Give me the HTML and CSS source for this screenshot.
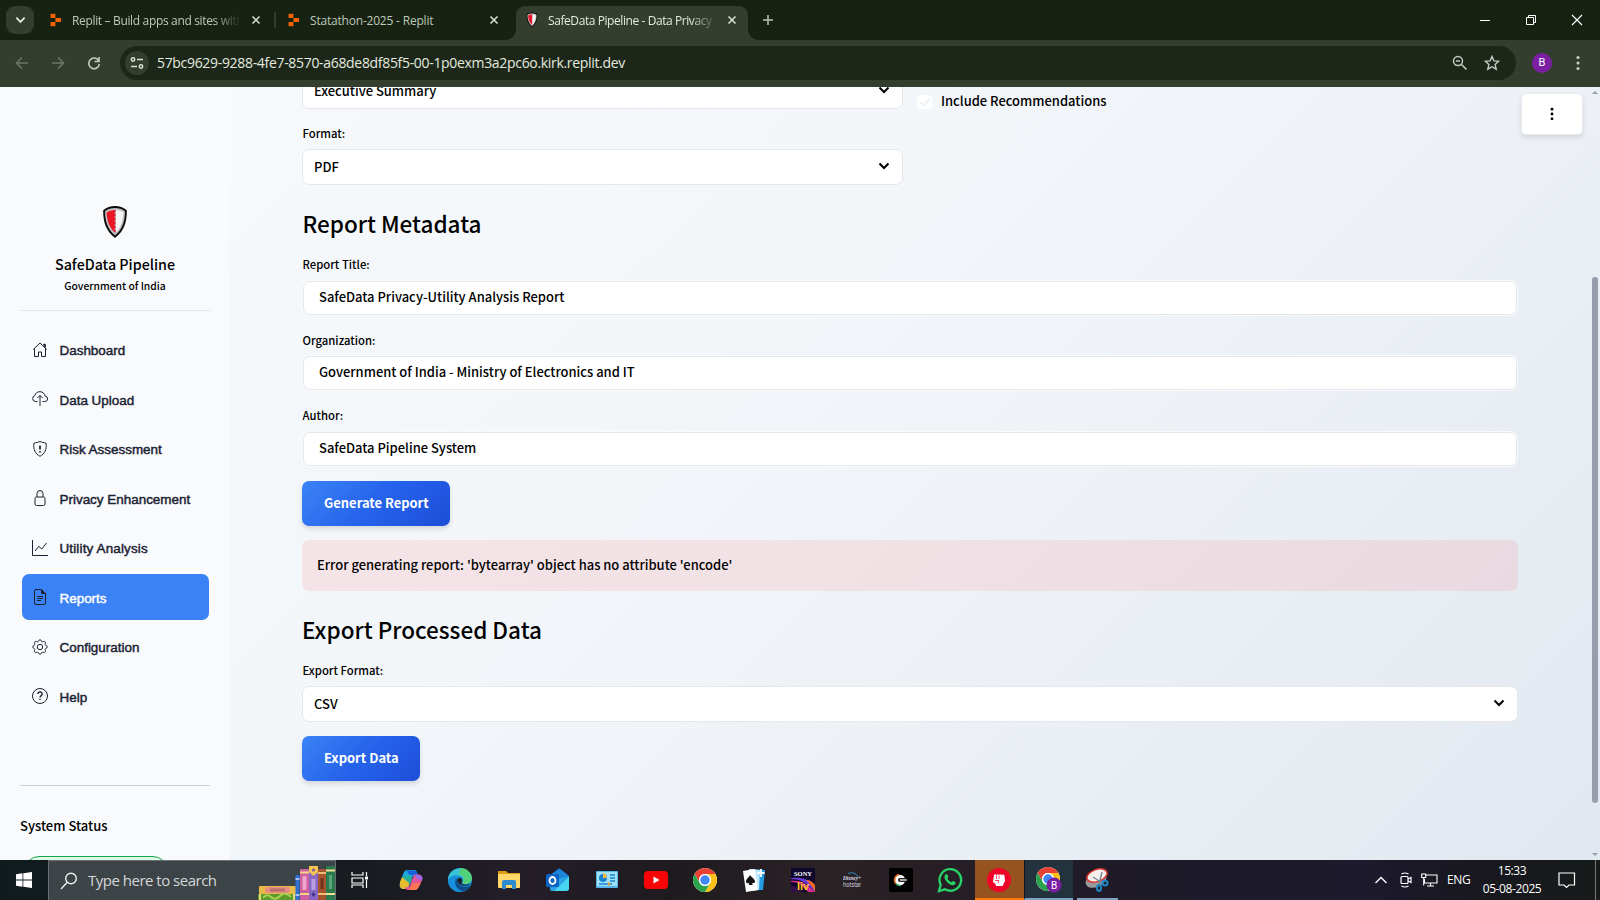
FILE: index.html
```html
<!DOCTYPE html>
<html lang="en">
<head>
<meta charset="utf-8">
<title>SafeData Pipeline - Data Privacy</title>
<link rel="stylesheet" href="styles.css">
</head>
<body>
<svg class="defs" width="0" height="0">
  <defs>
    <symbol id="replit" viewBox="0 0 12 14"><path fill="#f26207" d="M1.2.8h4.2v4.1H1.2A.7.7 0 0 1 .5 4.200V1.500a.7.7 0 0 1 .7-.7zM5.400 4.900h5a.7.7 0 0 1 .7.7v2.800a.7.7 0 0 1-.7.7h-5zM1.200 9.100h4.200v4.100H1.200a.7.7 0 0 1-.7-.7V9.800a.7.7 0 0 1 .7-.7z"/></symbol>
    <symbol id="shield" viewBox="0 0 26 34"><path d="M13 1C9 1 4 2.500 1.200 5.200 1 17 4 26 13 33c9-7 12-16 11.800-27.800C22 2.500 17 1 13 1z" fill="#0a0a0a"/><path d="M13 3c-3.500 0-7.500 1-10 3.200C3 16.500 6 24.500 13 30.500c7-6 10-14 10-24.300C20.500 4 16.500 3 13 3z" fill="#bdbdbd"/><path d="M14 5c3 .2 5.500 1 7.500 2.500C21 16 18.500 23 14 27.500z" fill="#f4f4f4"/><path d="M13.500 5C10 5 7 6 4.600 7.500 5 16 7.500 23 13.500 28v-3l-1.500-1 1.500-1v-2l-1.500-1 1.500-1v-2l-1.500-1 1.500-1v-2l-1.500-1 1.500-1V9l-1.500-1 1.500-1z" fill="#ec1528"/></symbol>
    <symbol id="x" viewBox="0 0 10 10"><path d="M1.500 1.500l7 7M8.500 1.500l-7 7" stroke="currentColor" stroke-width="1.500"/></symbol>
    <symbol id="chev" viewBox="0 0 12 8"><path d="M1.500 1.500L6 6l4.500-4.500" fill="none" stroke="currentColor" stroke-width="2"/></symbol>
    <symbol id="dots" viewBox="0 0 4 16"><g fill="currentColor"><circle cx="2" cy="2.500" r="1.600"/><circle cx="2" cy="8" r="1.600"/><circle cx="2" cy="13.500" r="1.600"/></g></symbol>
    <symbol id="chrome" viewBox="0 0 24 24"><circle cx="12" cy="12" r="12" fill="#fff"/><path d="M1.610 6A12 12 0 0 1 22.390 6H12a6 6 0 0 0-5.200 9z" fill="#e94235"/><path d="M22.390 6A12 12 0 0 1 12 24l5.200-9A6 6 0 0 0 12 6z" fill="#fbc116"/><path d="M1.610 6A12 12 0 0 0 12 24l5.200-9a6 6 0 0 1-10.400 0z" fill="#2ba24c"/><circle cx="12" cy="12" r="6" fill="#fff"/><circle cx="12" cy="12" r="4.700" fill="#4285f4"/></symbol>
  </defs>
</svg>

<header class="browser">
  <div class="tabs">
    <div class="tab-search"><svg width="11" height="8"><use href="#chev"/></svg></div>
    <div class="tab tab-a"><svg width="12" height="14"><use href="#replit"/></svg><span class="tab-text fade t1">Replit – Build apps and sites with</span><svg class="close" width="10" height="10"><use href="#x"/></svg></div>
    <i class="tab-sep"></i>
    <div class="tab tab-b"><svg width="12" height="14"><use href="#replit"/></svg><span class="tab-text t2">Statathon-2025 - Replit</span><svg class="close" width="10" height="10"><use href="#x"/></svg></div>
    <div class="tab tab-active"><svg width="12" height="16"><use href="#shield"/></svg><span class="tab-text fade t3">SafeData Pipeline - Data Privacy</span><svg class="close" width="10" height="10"><use href="#x"/></svg></div>
    <svg class="plus" width="12" height="12"><path d="M6 1v10M1 6h10" stroke="#b9c6b3" stroke-width="1.500"/></svg>
    <div class="win">
      <svg width="46" height="20"><path d="M18 10.500h10" stroke="#fff"/></svg>
      <svg width="46" height="20"><path d="M18.500 7.500h7v7h-7zM20.500 7.500v-2h7v7h-2" fill="none" stroke="#fff"/></svg>
      <svg width="46" height="20"><path d="M18 5l10 10M28 5L18 15" stroke="#fff" stroke-width="1.200"/></svg>
    </div>
  </div>
  <div class="toolbar">
    <svg class="nav" width="36" height="20" fill="none" stroke="#6c7768" stroke-width="1.500"><path d="M28 10H17M22 4.500L16.500 10l5.500 5.500"/></svg>
    <svg class="nav" width="36" height="20" fill="none" stroke="#6c7768" stroke-width="1.500"><path d="M16 10h11M22 4.500l5.500 5.500-5.500 5.500"/></svg>
    <svg class="nav" width="36" height="20" fill="none" stroke="#c2cfbb" stroke-width="1.600"><path d="M26.500 7.500A5.300 5.300 0 1 0 27.300 11M27 4v4.500h-4.500"/></svg>
    <div class="url">
      <span class="site"><svg width="14" height="14" fill="none" stroke="#d5e0cf" stroke-width="1.500"><circle cx="3" cy="3.500" r="1.700"/><path d="M7 3.500h6M1 10.500h6"/><circle cx="11" cy="10.500" r="1.700"/></svg></span>
      <span class="url-text">57bc9629-9288-4fe7-8570-a68de8df85f5-00-1p0exm3a2pc6o.kirk.replit.dev</span>
      <svg class="zoom" width="16" height="16" fill="none" stroke="#c2c9be" stroke-width="1.500"><circle cx="6" cy="6" r="4.500"/><path d="M9.500 9.500l5 5M4 6h4"/></svg>
      <svg class="star" width="16" height="16" viewBox="0 0 16 16"><path d="M8 1.500l1.900 4.400 4.800.4-3.600 3.200 1.100 4.700L8 11.700l-4.200 2.500 1.100-4.700L1.300 6.300l4.800-.4z" fill="none" stroke="#c2c9be" stroke-width="1.400"/></svg>
    </div>
    <span class="avatar">B</span>
    <svg class="kebab" width="4" height="16"><use href="#dots"/></svg>
  </div>
</header>

<div class="app">
  <aside class="side">
    <svg class="logo" width="26" height="34"><use href="#shield"/></svg>
    <div class="brand"><span>SafeData Pipeline</span></div>
    <div class="sub"><span>Government of India</span></div>
    <hr class="line1">
    <nav class="menu">
      <a><svg viewBox="0 0 16 16"><path d="M1.300 7.500L8 1l6.700 6.500M2.500 6.500v8h4v-4.500h3v4.500h4v-8"/><path d="M11.500 2.300h1.800v3.200z" fill="currentColor"/></svg><span>Dashboard</span></a>
      <a><svg viewBox="0 0 16 16"><path d="M5.500 10.500h-2a3 3 0 0 1-.6-5.900A5.200 5.200 0 0 1 8 .7c2.700 0 4.900 2 5.100 4.400a2.700 2.700 0 0 1-.4 5.400h-2.200M8 15V4.500M5.500 7L8 4.500 10.500 7"/></svg><span>Data Upload</span></a>
      <a><svg viewBox="0 0 16 16"><path d="M8 .6C6.500 1 4 1.800 1.900 2.200 1 8.500 3.500 13 8 15.300c4.500-2.300 7-6.800 6.100-13.100C12 1.800 9.500 1 8 .6z"/><path d="M8 4.500v4M8 10v1.500" stroke-width="1.700"/></svg><span>Risk Assessment</span></a>
      <a><svg viewBox="0 0 16 16"><path d="M5 7V3.500a3 3 0 0 1 6 0V7M4.500 7h7a1.500 1.500 0 0 1 1.500 1.500V14a1.500 1.500 0 0 1-1.500 1.500h-7A1.500 1.500 0 0 1 3 14V8.500A1.500 1.500 0 0 1 4.500 7z"/></svg><span>Privacy Enhancement</span></a>
      <a><svg viewBox="0 0 16 16"><path d="M.5 0v15.500H16M3 11l3.800-4.700 3 2.700L14.500 3"/></svg><span class="wide">Utility Analysis</span></a>
      <a class="on"><svg viewBox="0 0 16 16"><path d="M9.500.5H4A1.500 1.500 0 0 0 2.500 2v12A1.500 1.500 0 0 0 4 15.500h8a1.500 1.500 0 0 0 1.500-1.500V4.500zM5 7.500h6M5 9.500h6M5 11.500h4"/><path d="M9.500.5v4h4z" fill="currentColor"/></svg><span>Reports</span></a>
      <a><svg viewBox="0 0 16 16"><circle cx="8" cy="8" r="2.700"/><path d="M6.700 1.800c.4-1.500 2.200-1.500 2.600 0 .2 1 1.200 1.300 2 .8 1.400-.7 2.700.6 2 1.900-.5.900-.1 1.900.9 2.200 1.500.4 1.500 2.200 0 2.600-1 .3-1.400 1.300-.9 2.200.7 1.300-.6 2.600-2 1.900-.8-.5-1.800-.1-2 .8-.4 1.500-2.200 1.500-2.600 0-.3-.9-1.300-1.300-2.200-.8-1.300.7-2.600-.6-1.900-1.900.5-.9.1-1.900-.8-2.200-1.500-.4-1.500-2.200 0-2.600.9-.3 1.300-1.300.8-2.200-.7-1.300.6-2.600 1.900-1.900.9.500 1.900.1 2.200-.8z"/></svg><span>Configuration</span></a>
      <a><svg viewBox="0 0 16 16"><circle cx="8" cy="8" r="7.500"/><path d="M5.800 6c0-2.800 4.500-2.600 4.400 0C10.200 7.500 8 7.800 8 9.500M8 10.700v1.400" stroke-width="1.400"/></svg><span>Help</span></a>
    </nav>
    <hr class="line2">
    <div class="status">System Status</div>
    <div class="pill"></div>
  </aside>

  <main class="main">
    <div class="top">
      <div class="half">
        <div class="select cut"><span class="w1">Executive Summary</span><svg width="12" height="8"><use href="#chev"/></svg></div>
        <div class="label fmt">Format:</div>
        <div class="select"><span>PDF</span><svg width="12" height="8"><use href="#chev"/></svg></div>
      </div>
      <div class="check"><i><svg width="15" height="14"><path d="M3 7l3.500 3.500L12.500 4" fill="none" stroke="#eef1f5" stroke-width="2"/></svg></i><span class="w2">Include Recommendations</span></div>
    </div>
    <h2 class="h-meta">Report Metadata</h2>
    <div class="label l1">Report Title:</div>
    <div class="input">SafeData Privacy-Utility Analysis Report</div>
    <div class="label l2">Organization:</div>
    <div class="input">Government of India - Ministry of Electronics and IT</div>
    <div class="label l2 l-author">Author:</div>
    <div class="input">SafeData Pipeline System</div>
    <div class="btn gen">Generate Report</div>
    <div class="alert">Error generating report: 'bytearray' object has no attribute 'encode'</div>
    <h2 class="h-exp">Export Processed Data</h2>
    <div class="label l3">Export Format:</div>
    <div class="select"><span>CSV</span><svg width="12" height="8"><use href="#chev"/></svg></div>
    <div class="btn exp">Export Data</div>
  </main>
  <div class="more"><svg width="4" height="14"><use href="#dots"/></svg></div>
  <div class="scroll"><i class="up"></i><i class="thumb"></i><i class="down"></i></div>
</div>

<footer class="taskbar">
  <div class="start"><svg width="16" height="16" fill="#fff"><path d="M0 2.200l6.500-.9v6.300H0zM7.300 1.200L16 0v7.600H7.300zM0 8.400h6.500v6.300L0 13.800zM7.300 8.400H16V16l-8.700-1.200z"/></svg></div>
  <div class="search">
    <svg class="mag" width="18" height="18" fill="none" stroke="#eee" stroke-width="1.400"><circle cx="11" cy="6.500" r="5.300"/><path d="M7 10.500L1 17"/></svg>
    <span>Type here to search</span>
    <svg class="books" width="77" height="34" viewBox="0 0 77 34">
      <rect x="1" y="20" width="37" height="8" rx="1" fill="#e9b949"/><rect x="7" y="21" width="25" height="6" rx="3" fill="#e98a83"/><rect x="12" y="22.500" width="15" height="3" fill="#b9706d"/>
      <rect x="0" y="28" width="38" height="6" fill="#5c9a2a"/><path d="M5 32q4-5 8-1t9-1 11 1" stroke="#a8d050" stroke-width="2" fill="none"/><path d="M2 28v6M36 28v6" stroke="#e8d97a" stroke-width="2"/>
      <rect x="37.500" y="9" width="4" height="25" fill="#2e6fd6"/><path d="M37.500 13h4M37.500 29h4" stroke="#cfe0ff" stroke-width="1.500"/>
      <rect x="42" y="3" width="9" height="31" rx="1" fill="#cf5f9e"/><rect x="44.500" y="10" width="4" height="14" rx="1" fill="#efa5cb"/><path d="M42 6.500h9M42 28h9" stroke="#f3d88a" stroke-width="2"/>
      <rect x="51" y="0" width="9" height="34" rx="1" fill="#8867c4"/><path d="M51 0h9v6l-4.500 4L51 6z" fill="#f1c54f"/><circle cx="55.500" cy="4" r="1.500" fill="#7654ac"/><rect x="53.500" y="13" width="4" height="11" fill="#b7a0e2"/><path d="M55.500 26l2 2.500-2 2.500-2-2.500z" fill="#42308a"/>
      <rect x="60" y="3" width="8" height="31" rx="1" fill="#a4552f"/><rect x="62.500" y="12" width="3" height="11" fill="#6f3420"/><path d="M60 7h8M60 28h8" stroke="#efbd77" stroke-width="2"/>
      <rect x="68" y="0" width="9" height="34" rx="1" fill="#2b7a4d"/><rect x="71" y="9" width="3" height="14" fill="#58a779"/><path d="M68 4.500h9M68 28h9" stroke="#f0df94" stroke-width="2"/>
    </svg>
  </div>
  <div class="slots">
    <div class="view"><svg width="18" height="18" fill="none" stroke="#fff" stroke-width="1.200"><path d="M1 1v3h11V1M1 7h11v5H1zM1 17v-3h11v3M15.500 1v4M15.500 9v8"/><rect x="14" y="5.500" width="3" height="3" fill="#fff" stroke="none"/></svg></div>
    <div><svg width="24" height="24" viewBox="0 0 24 24"><path d="M9 2h6c2 0 2.700 1 3.200 3l.8 2.500h-3c-2 0-2.700 1-3.300 3L10 18c-.7 2-1.500 3-3.500 3H4.500C1.500 21 0 18.500 1 15L4.500 5C5.500 2.500 7 2 9 2z" fill="#1ca7dd"/><path d="M7 2.500h8c2 0 2.700 1 3.200 3l.5 2H15l-5-1z" fill="#1a62dd"/><path d="M1 14l2-5 8 5-1.500 4.500C9 20 8 21 6.500 21H4.500C2 21 .5 19 .8 16.500z" fill="#e7bd2d"/><path d="M3 9l8-2 2 5-2 4z" fill="#2aae9c"/><path d="M15 22H9c-1.800 0-2.700-1-3.200-2.800H8c2 0 2.700-1 3.300-3L14 9c.7-2 1.500-2.500 3.500-2.500h2c3 0 4.500 2.500 3.500 6L19.500 19c-1 2.500-2.500 3-4.500 3z" fill="#df549b"/><path d="M8 22c4 0 4-7 7-7h7l-2.500 4.500C18.500 21.500 17 22 15 22z" fill="#fb7453"/><path d="M16 7h3.500c3 0 4.500 2 3.700 5L18 11z" fill="#9b67e4"/></svg></div>
    <div><svg width="24" height="24" viewBox="0 0 24 24"><circle cx="12" cy="12" r="12" fill="#168fd9"/><path d="M1 7C5-1 16-2 21 4c4 4 3.500 10-1 11.500-3 1-6 0-5.500-1 2-3-1-7-5-7C5 7.500 1.500 9.500.2 13 0 11 0 9 1 7z" fill="#36c4d4"/><path d="M13 0c6 0 11 5 11 10 0 4-3 6-6 6-2 0-4-.7-3.500-1.500 3-5-.5-8-4-8z" fill="#5cd65c" opacity=".75"/><path d="M8.500 8C3 10 4 22 14 23.800 7 25 0 20 0 12c1-3 5-5 8.500-4z" fill="#168fdd"/><path d="M8.500 10C5 15 9 23 16 23c3-1 5-3 6.500-5.500C16 21 8.500 17.500 8.500 10z" fill="#114a8b"/><path d="M10 10.500c2.500-1.800 4.500.5 4.200 2.700-.3 1-1 1.500-.5 2 1 1.500 4 2 6 1l3-.8c-4 3.800-11 2.500-13-1.500-.8-1.400-.8-2.600.3-3.400z" fill="#202024"/></svg></div>
    <div><svg width="22" height="20"><path d="M0 1h8l2 2h12v4H0z" fill="#dd9b16"/><rect y="4" width="22" height="14" rx="1" fill="#ffd869"/><path d="M4 19v-7q0-2 2-2h10q2 0 2 2v7h-4v-4H8v4z" fill="#2d8bd2"/></svg></div>
    <div><svg width="24" height="24"><path d="M3 8l10-8 10 8v11l-10 4-8-2z" fill="#126ec6"/><path d="M6 6l8-5 8 6-8 7z" fill="#1d84d8"/><path d="M4 13l19-5v12q0 3-3 3H6q-2 0-2-2z" fill="#2aa4e5"/><path d="M8 23L23 9v11q0 3-3 3z" fill="#48d6f2"/><rect y="6" width="13" height="13" rx="1.500" fill="#0c64c5"/><ellipse cx="6.500" cy="12.500" rx="3" ry="3.500" fill="none" stroke="#fff" stroke-width="1.800"/></svg></div>
    <div><svg width="22" height="18"><rect width="22" height="17" rx="1" fill="#55b5ea"/><rect x="1" y="1" width="20" height="14" fill="#9fe0fa"/><circle cx="7" cy="7" r="4" fill="#1684cf"/><path d="M7 7V2a5 5 0 0 1 4 5z" fill="#f5b642"/><path d="M14 4h5M14 7h5M14 10h5M3 13h13" stroke="#1684cf" stroke-width="1.500"/><circle cx="13" cy="13" r="1.500" fill="#e79a2e"/></svg></div>
    <div><svg width="24" height="18"><rect width="24" height="18" rx="4" fill="#f50505"/><path d="M9.500 5.500l6 3.500-6 3.500z" fill="#fff"/></svg></div>
    <div><svg width="24" height="24"><use href="#chrome"/></svg></div>
    <div><svg width="24" height="24"><path d="M8 1l15 1-2 20H10z" fill="#239be4"/><path d="M7 1l11 1-1 20-9 1z" fill="#bde7fb"/><path d="M1 3l12-2 3 21-12 2z" fill="#fff"/><path d="M8 7c1 2 5 4 5 6.500 0 1.700-2 2.200-3.200 1.200l.9 2.300H6.800l.5-2.300C6 16 4 15.200 4 13.500 4 11 7 9.500 8 7z" fill="#111"/><path d="M19 1v8M15.500 5h7" stroke="#fff" stroke-width="1.800"/></svg></div>
    <div><svg width="24" height="24"><rect width="24" height="24" fill="#10082c"/><path d="M0 11c10 0 14 3 24 13v-6C16 10 10 9 0 10z" fill="#6a37da"/><path d="M0 14c8 0 10 3 17 10h7C14 14 8 12 0 13z" fill="#d52b8c"/><path d="M0 18c6 0 8 3 12 6H0z" fill="#36104c"/><path d="M15 12c4 0 7 2 9 5v7c-2-5-5-8-9-12z" fill="#ff6a24"/><text x="12" y="7.500" text-anchor="middle" class="sony">SONY</text><text x="12" y="22" text-anchor="middle" class="liv">liv</text></svg></div>
    <div><svg width="24" height="24"><path d="M8 5.500q7-2.500 10 3.500" fill="none" stroke="#238fba"/><text x="12" y="12" text-anchor="middle" class="disney" textLength="18" lengthAdjust="spacingAndGlyphs">Disney+</text><text x="12" y="18.500" text-anchor="middle" class="hot" textLength="18" lengthAdjust="spacingAndGlyphs">hotstar</text></svg></div>
    <div><svg width="24" height="24"><rect width="24" height="24" rx="2" fill="#000"/><circle cx="11" cy="12" r="5.200" fill="#fff"/><path d="M10 6.500a5.500 5.500 0 0 0-3 9" stroke="#e8762a" stroke-width="1.500" fill="none"/><path d="M7 16q2 2 5 1.500" stroke="#24a657" stroke-width="1.500" fill="none"/><rect x="9" y="10" width="9.500" height="4" rx="2" fill="#222"/><path d="M11 12h6.500" stroke="#ccc" stroke-width="1.600"/></svg></div>
    <div><svg width="26" height="26"><path d="M2 24l1.700-6.200A10.800 10.800 0 1 1 8 22.300z" fill="none" stroke="#27d366" stroke-width="2.300"/><path d="M8.500 7.500c.8-.8 1.700-.5 2 .3l.8 1.900c.2.700-1 1.500-.9 1.900.9 1.700 2.200 2.900 3.900 3.600.6.200 1.200-1.400 1.900-1.200l2 1c.8.500.3 2.200-.7 2.800-2 1.300-5-.2-7-2.200s-4.500-5.500-2-8.100z" fill="#27d366"/></svg></div>
    <div class="bite"><svg width="24" height="24"><circle cx="12" cy="12" r="12" fill="#ee0629"/><path d="M7 7q1.300-1.500 2.500 0 1.300-1.500 2.500 0 1.300-1.500 2.500 0 2.500-1 3 .5l.5 5.500-2 4-.5 1H9l-.5-2-2.500-2z" fill="#fff"/><path d="M9.500 7.500V11M12 7.500V11M8 12.500h4l-1 2.500" stroke="#ee0629" stroke-width=".7" fill="none"/></svg></div>
    <div class="act"><svg width="26" height="26"><use href="#chrome" width="24" height="24"/><circle cx="18" cy="18" r="7.500" fill="#7b1fa2"/><text x="18" y="21.800" text-anchor="middle" class="bb">B</text></svg></div>
    <div class="snip"><svg width="24" height="24"><ellipse cx="11" cy="12" rx="11" ry="7" fill="#999" transform="rotate(-25 11 12)"/><ellipse cx="12" cy="7.500" rx="10.500" ry="6" fill="#f7f1ee" stroke="#d9342d" stroke-width="1.500" transform="rotate(-20 12 7.500)"/><path d="M8 9l9 6M17 4l-3 12" stroke="#7b8790" stroke-width="1.500"/><g fill="none" stroke="#2086c8" stroke-width="2"><circle cx="20" cy="15" r="2.500"/><ellipse cx="14" cy="20" rx="2" ry="3"/></g></svg></div>
  </div>
  <div class="tray">
    <svg class="t-up" width="14" height="8" fill="none" stroke="#fff" stroke-width="1.400"><path d="M1.500 7L7 1.500 12.500 7"/></svg>
    <svg class="t-cam" width="14" height="16" fill="none" stroke="#fff" stroke-width="1.200"><rect x="2" y="4.500" width="7" height="7" rx="1"/><path d="M9 7l3-1.500v5L9 9M2.500 2q3.500-2 7 0M2.500 14q3.500 2 7 0"/></svg>
    <svg class="t-net" width="17" height="14" fill="none" stroke="#fff" stroke-width="1.100"><path d="M5 2h11v8H3.500V6M9.500 10v3M6 13h7M.7 1h4v3.500h-4zM2.700 4.500v8"/></svg>
    <span class="eng">ENG</span>
    <div class="clock"><span>15:33</span><span>05-08-2025</span></div>
    <svg class="t-note" width="18" height="17" fill="none" stroke="#fff" stroke-width="1.200"><path d="M1 1h15.500v12H11l-2.500 2.500L6 13H1z"/></svg>
    <i class="desk"></i>
  </div>
</footer>
</body>
</html>
```

FILE: styles.css
```css
* { box-sizing: border-box; }
html, body { margin: 0; width: 1600px; height: 900px; overflow: hidden; }
body { display: flex; flex-direction: column; font-family: "Noto Sans CJK SC", "Noto Sans", sans-serif; color: #000; }
svg { display: block; flex: none; }
.defs { position: absolute; }

/* browser chrome */
.browser { height: 87px; flex: none; background: #333e2f; font-family: "Open Sans", "Noto Sans", sans-serif; }
.tabs { height: 40px; background: #172213; display: flex; align-items: center; padding-left: 6px; }
.tab-search { width: 28px; height: 28px; border-radius: 9px; background: #333e2f; color: #e3ebdf; display: grid; place-items: center; }
.tab { display: flex; align-items: center; height: 34px; color: #bdc9b8; font-size: 12px; flex: none; }
.tab-a { width: 240px; padding-left: 16px; }
.tab-b { width: 241px; padding-left: 12px; }
.tab-sep { width: 2px; height: 16px; background: #333e2f; }
.tab-text { white-space: nowrap; overflow: hidden; margin-left: 10px; line-height: 18px; padding-top: 1px; }
.t1 { width: 169px; letter-spacing: -0.34px; }
.t2 { width: 169px; letter-spacing: -0.2px; }
.t3 { width: 169px; color: #e3eadf; letter-spacing: -0.42px; }
.fade { -webkit-mask-image: linear-gradient(90deg, #000 84%, transparent); mask-image: linear-gradient(90deg, #000 84%, transparent); }
.close { margin-left: 10px; color: #dbe4d7; }
.tab-active { width: 232px; height: 34px; align-self: flex-end; margin-left: -1px; background: #333e2f; border-radius: 9px 9px 0 0; padding-left: 10px; padding-bottom: 6px; position: relative; }
.tab-active::before, .tab-active::after { content: ""; position: absolute; bottom: 0; width: 10px; height: 10px; }
.tab-active::before { left: -10px; background: radial-gradient(circle at 0 0, #172213 9.500px, #333e2f 10px); }
.tab-active::after { right: -10px; background: radial-gradient(circle at 100% 0, #172213 9.500px, #333e2f 10px); }
.plus { margin-left: 14px; }
.win { display: flex; margin-left: auto; }
.toolbar { height: 47px; display: flex; align-items: center; padding-bottom: 1px; background: #333e2f; }
.url { margin-left: 12px; width: 1396px; height: 34px; border-radius: 17px; background: #1c271a; display: flex; align-items: center; padding-left: 5px; }
.site { width: 24px; height: 24px; border-radius: 50%; background: #333e2f; display: grid; place-items: center; }
.url-text { margin-left: 8px; padding-bottom: 1px; color: #e4eadf; font-size: 14px; letter-spacing: -0.32px; flex: 1; }
.zoom { margin-right: 16px; }
.star { margin-right: 16px; }
.avatar { margin-left: 16px; width: 20px; height: 20px; border-radius: 50%; background: #7b1fa2; color: #fff; font: 11px/20px Roboto, sans-serif; text-align: center; }
.kebab { margin-left: 24px; color: #c2d2bb; }

/* page */
.app { flex: 1; height: 773px; display: flex; position: relative; overflow: hidden; background: linear-gradient(135deg, #f8fafc 0%, #f1f5f9 50%, #e2e8f0 100%); }
.side { width: 230px; flex: none; background: #f9fafc; display: flex; flex-direction: column; height: 773px; overflow: hidden; }
.logo { margin: 118px auto 0 102px; }
.brand { margin-top: 13px; height: 24px; line-height: 24px; font-size: 14.250px; font-weight: 500; text-align: center; }
.sub { margin-top: 2px; height: 16px; line-height: 16px; font-size: 10.350px; font-weight: 500; text-align: center; }
.line1, .line2 { width: 191px; margin: 0 0 0 20px; border: 0; height: 1px; flex: none; background: #dfe7f0; }
.line1 { margin-top: 16px; }
.menu { margin: 15px 21px 0 22px; display: flex; flex-direction: column; gap: 3.500px; }
.menu a { height: 46px; display: flex; align-items: center; border-radius: 7px; padding-left: 10px; font: 13.450px "Liberation Sans", sans-serif; color: #1a2233; -webkit-text-stroke: .45px currentColor; }
.menu svg { width: 16px; height: 16px; margin-right: 11.500px; margin-top: 1px; fill: none; stroke: #1a2233; stroke-width: 1; color: #1a2233; }
.menu span { padding-top: 3px; }
.menu .wide { letter-spacing: .15px; }
.menu .on { background: #3b82f6; color: #fff; }
.line2 { margin-top: 66px; width: 190px; background: #cdcfd3; }
.status { margin: 28px 0 0 20px; height: 24px; line-height: 24px; font-size: 13px; font-weight: 500; }
.pill { margin: 18px 0 0 24px; width: 144px; height: 30px; flex: none; border: 1px solid #16a34a; border-radius: 15px; background: #dcfce7; }

.main { margin-left: 72px; width: 1216px; display: flex; flex-direction: column; font-size: 12.960px; font-weight: 500; }
.top { display: flex; height: 98px; }
.half { width: 601px; }
.select { width: 100%; height: 36px; flex: none; background: #fff; border: 1px solid #e5e7ec; border-radius: 7px; display: flex; align-items: center; justify-content: space-between; padding: 0 12px 2px 11px; }
.cut { margin-top: -14px; }
.label { font-size: 11.300px; height: 18px; line-height: 18px; flex: none; padding-left: .5px; }
.fmt { margin: 15px 0 7px; }
.check { margin: 5px 0 0 14px; display: flex; align-items: center; height: 18px; }
.check i { width: 15px; height: 14px; background: #fff; border-radius: 3px; margin-top: 1px; }
.check span { margin-left: 9px; margin-top: -1px; }
h2 { font-size: 22.500px; font-weight: 500; line-height: 36px; height: 36px; margin: 0; flex: none; }
.h-meta { margin-top: 20px; padding-left: .5px; }
.l1 { margin: 14px 0 8px; }
.input { height: 34px; width: 1214px; margin-left: 1px; flex: none; border: 1px solid #e5e7ec; border-radius: 7px; background: #fff; box-shadow: 0 0 0 1px #f8fafc; line-height: 30px; padding-left: 15px; }
.l2 { margin: 16px 0 7px; }
.l-author { margin-bottom: 8px; }
.btn { height: 45px; flex: none; border-radius: 7px; color: #fff; font-weight: 700; line-height: 44px; padding-left: 22px; background: linear-gradient(135deg, #3b82f6 0%, #2563eb 50%, #1d4ed8 100%); box-shadow: 0 3px 5px rgba(0, 0, 0, .12); }
.gen { width: 148px; margin-top: 15px; }
.alert { margin-top: 14px; height: 51px; flex: none; border-radius: 7px; background: rgba(255, 43, 43, .09); line-height: 49px; padding-left: 15px; }
.h-exp { margin-top: 20px; }
.l3 { margin: 14px 0 7px; }
.exp { width: 118px; margin-top: 14px; }
.more { position: absolute; right: 17px; top: 6px; width: 62px; height: 42px; background: #fff; border: 1px solid #e8ebef; border-radius: 5px; box-shadow: 0 3px 5px rgba(0, 0, 0, .1); display: grid; place-items: center; }
.scroll { position: absolute; right: 2px; top: 0; width: 6px; height: 773px; }
.thumb { position: absolute; top: 190px; left: 0; width: 6px; height: 526px; border-radius: 3px; background: #989dab; }
.up, .down { position: absolute; left: 0; border: 3px solid transparent; }
.up { top: 1px; border-bottom-color: #989dab; }
.down { bottom: 1px; border-top-color: #989dab; }

/* taskbar */
.taskbar { height: 40px; flex: none; display: flex; background: linear-gradient(90deg, #101b1e 0%, #181c20 23%, #241d28 33%, #1e1b1f 42%, #2b2226 52%, #281f25 58%, #1e1a27 70%, #1d1a2d 85%, #18181f 92%, #171b1a 100%); font-family: "Open Sans", "Noto Sans", sans-serif; color: #fff; }
.start { width: 48px; display: grid; place-items: center; }
.search { width: 288px; height: 40px; background: #3d4448; border: 1px solid #6a7073; border-bottom: 0; display: flex; align-items: center; padding-left: 11px; }
.search span { margin-left: 10px; font-size: 15px; letter-spacing: -0.5px; color: #d4d6d7; flex: 1; white-space: nowrap; padding-bottom: 1px; }
.books { align-self: flex-end; }
.slots { display: grid; grid-template-columns: repeat(16, 49.050px); margin-left: 1px; }
.slots div { display: grid; place-items: center; }
.slots .view { padding-right: 3px; }
.slots .bite { background: #96531f; border-bottom: 2px solid #ff7800; padding-top: 2px; }
.slots .act { background: #23333d; border-bottom: 2px solid #7fa2c4; border-left: 1px solid #101418; padding-top: 2px; }
.slots .snip { border-bottom: 2px solid #7fa2c4; margin: 0 4px; padding-top: 2px; }
.sony { font: bold 6.500px "Liberation Serif", serif; fill: #fff; }
.liv { font: bold 11px "Liberation Sans", sans-serif; fill: #ffc21e; }
.disney { font: italic bold 7px "Liberation Serif", serif; fill: #dde; }
.hot { font: 6.500px "Liberation Sans", sans-serif; fill: #ccd; }
.bb { font: 10px Roboto, sans-serif; fill: #fff; }
.tray { margin-left: auto; display: flex; align-items: center; }
.t-cam { margin-left: 11px; }
.t-net { margin-left: 8px; }
.eng { margin-left: 9px; width: 24px; font-size: 12px; letter-spacing: -0.3px; padding-bottom: 1px; }
.clock { margin-left: 9px; width: 64px; display: flex; flex-direction: column; align-items: center; font-size: 12px; line-height: 18px; letter-spacing: -0.4px; white-space: nowrap; }
.t-note { margin-left: 14px; }
.desk { width: 1px; height: 40px; margin: 0 4px 0 19px; background: #777; }
```
